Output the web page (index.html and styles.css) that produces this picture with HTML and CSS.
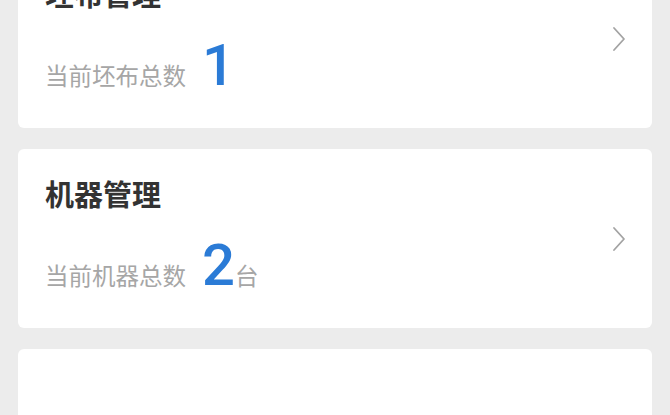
FILE: index.html
```html
<!DOCTYPE html>
<html lang="zh-CN">
<head>
    <meta charset="UTF-8">
    <meta name="viewport" content="width=device-width, initial-scale=1.0">
    <title>管理</title>
    <link rel="stylesheet" href="styles.css">
</head>
<body>
    <div class="list">
        <div class="card">
            <div class="card-body">
                <div class="card-title">坯布管理</div>
                <div class="card-info">
                    <span class="label">当前坯布总数</span>
                    <span class="count">1</span>
                </div>
            </div>
            <svg class="arrow" width="14" height="26" viewBox="0 0 14 26"><path d="M2 2 L12 13 L2 24" fill="none" stroke="#a3a3a3" stroke-width="1.8" stroke-linecap="round" stroke-linejoin="round"/></svg>
        </div>

        <div class="card">
            <div class="card-body">
                <div class="card-title">机器管理</div>
                <div class="card-info">
                    <span class="label">当前机器总数</span>
                    <span class="count">2</span>
                    <span class="unit">台</span>
                </div>
            </div>
            <svg class="arrow" width="14" height="26" viewBox="0 0 14 26"><path d="M2 2 L12 13 L2 24" fill="none" stroke="#a3a3a3" stroke-width="1.8" stroke-linecap="round" stroke-linejoin="round"/></svg>
        </div>

        <div class="card">
            <div class="card-body"></div>
        </div>
    </div>
</body>
</html>
```

FILE: styles.css
```css
body {
    margin: 0;
    padding: 0;
    background: #ececec;
    font-family: 'Noto Sans CJK SC', 'Noto Sans', sans-serif;
    overflow: hidden;
}

.list {
    display: flex;
    flex-direction: column;
    gap: 21px;
    padding: 0 18px;
    margin-top: -51px;
}

.card {
    background: #fff;
    border-radius: 6px;
    height: 179px;
    box-sizing: border-box;
    padding: 0 26px 0 27px;
    display: flex;
    align-items: center;
}

.card-body {
    flex: 1;
    display: flex;
    flex-direction: column;
    justify-content: flex-start;
    height: 100%;
    padding-top: 26px;
    box-sizing: border-box;
}

.card-title {
    font-size: 29px;
    font-weight: bold;
    color: #333;
    line-height: 36px;
}

.card-info {
    display: flex;
    align-items: baseline;
    margin-top: 29px;
    color: #a6a6a6;
    font-size: 23.5px;
}

.card-info .count {
    font-family: Roboto, 'Noto Sans', sans-serif;
    font-weight: 500;
    font-size: 58px;
    line-height: 50px;
    color: #2b7bd6;
    margin-left: 16px;
}

.card-info .unit {
    margin-left: 0;
}

.arrow {
    flex-shrink: 0;
}
```
